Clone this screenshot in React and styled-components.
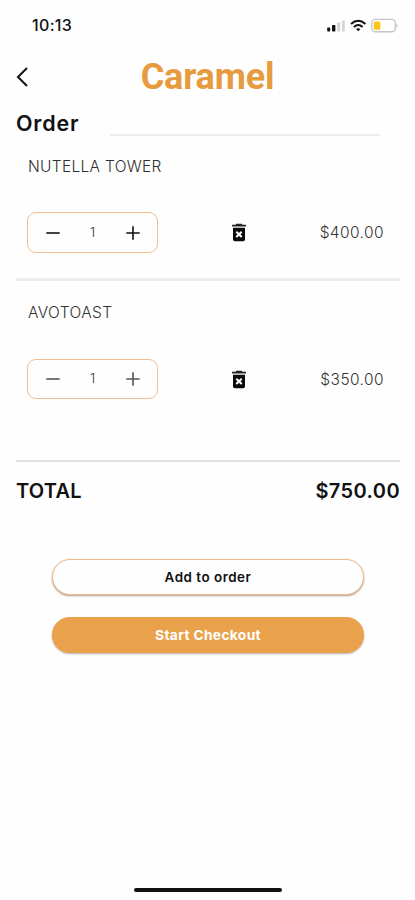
import React from "react";
import styled, { createGlobalStyle } from "styled-components";

const GlobalStyle = createGlobalStyle`
  *, *::before, *::after { box-sizing: border-box; }
  body { margin: 0; background: #fefefe; font-family: Inter, "Liberation Sans", sans-serif; color: #111; }
  button { font-family: inherit; padding: 0; margin: 0; border: 0; background: none; color: inherit; }
`;

const Screen = styled.main`
  width: 415px;
  height: 900px;
  display: flex;
  flex-direction: column;
  background: #fefefe;
  overflow: hidden;
`;

const StatusBar = styled.div`
  height: 51px;
  display: flex;
  align-items: center;
  justify-content: space-between;
  padding: 0 16px 0 32px;
`;

const Time = styled.span`
  font-size: 16px;
  font-weight: 500;
  line-height: 20px;
  padding-bottom: 1px;
  letter-spacing: 0.35px;
`;

const StatusIcons = styled.svg`
  width: 73px;
  height: 16px;
  display: block;
`;

const Header = styled.header`
  height: 52px;
  display: grid;
  grid-template-columns: 45px 1fr 45px;
  align-items: center;
`;

const BackButton = styled.button`
  width: 45px;
  height: 44px;
  display: flex;
  align-items: center;
  padding-left: 15px;
`;

const Brand = styled.h1`
  margin: 0;
  text-align: center;
  font-family: Roboto, sans-serif;
  font-size: 36px;
  font-weight: 700;
  line-height: 50px;
  letter-spacing: -0.2px;
  color: #e69b3f;
`;

const OrderHeading = styled.div`
  height: 40px;
  display: flex;
  align-items: flex-start;
  justify-content: space-between;
  padding: 0 35px 0 16px;
`;

const Heading = styled.h2`
  margin: 0;
  font-size: 21.5px;
  font-weight: 600;
  line-height: 40px;
  letter-spacing: 0.85px;
`;

const HeadingRule = styled.div`
  width: 270px;
  height: 2px;
  margin-top: 31px;
  background: #ececec;
`;

const Item = styled.section`
  height: ${(p) => p.$height}px;
  margin: 0 15px 0 16px;
  padding: ${(p) => p.$top}px 16px 0 11px;
  border-bottom: ${(p) => p.$rule}px solid ${(p) => p.$ruleColor};
`;

const ItemName = styled.div`
  padding-left: 1px;
  font-size: 15.5px;
  font-weight: 300;
  line-height: 20px;
  letter-spacing: ${(p) => p.$tracking}px;
  color: #303030;
  white-space: nowrap;
`;

const ItemRow = styled.div`
  height: 41px;
  margin-top: ${(p) => p.$gap}px;
  display: grid;
  grid-template-columns: 131px 1fr 83px;
  align-items: center;
`;

const Stepper = styled.div`
  height: ${(p) => p.$height}px;
  align-self: start;
  display: grid;
  grid-template-columns: 49px 1fr 49px;
  align-items: center;
  border: 1px solid #f2bd90;
  border-radius: 9px;
`;

const StepButton = styled.button`
  height: 38px;
  display: flex;
  align-items: center;
  justify-content: center;
  color: ${(p) => (p.$soft ? "#555" : "#111")};
`;

const Quantity = styled.span`
  text-align: center;
  font-size: 13px;
  font-weight: 300;
  line-height: 20px;
  padding-bottom: 2px;
  color: #333;
`;

const DeleteButton = styled.button`
  display: flex;
  justify-content: center;
  width: 24px;
  margin-left: 69px;
`;

const Price = styled.span`
  text-align: right;
  font-size: 15.5px;
  font-weight: 300;
  line-height: 20px;
  letter-spacing: 0.42px;
  color: #333;
`;

const TotalRow = styled.div`
  height: 59px;
  display: flex;
  align-items: center;
  justify-content: space-between;
  padding: 0 15px 2px 16px;
  font-size: 20px;
  font-weight: 600;
  line-height: 24px;
`;

const TotalText = styled.span`
  letter-spacing: ${(p) => p.$tracking}px;
`;

const Actions = styled.div`
  margin: 38px 51px 0 52px;
  display: flex;
  flex-direction: column;
  gap: 22px;
`;

const ActionButton = styled.button`
  height: 36px;
  border-radius: 18px;
  font-size: ${(p) => (p.$primary ? 13.8 : 13.4)}px;
  line-height: 20px;
  font-weight: ${(p) => (p.$primary ? 700 : 600)};
  letter-spacing: ${(p) => (p.$primary ? 0.33 : 0.52)}px;
  color: ${(p) => (p.$primary ? "#fff" : "#111")};
  background: ${(p) => (p.$primary ? "#e9a24b" : "#fefefe")};
  border: ${(p) => (p.$primary ? "0" : "1px solid #efba87")};
  box-shadow: 0 1px 2px ${(p) => (p.$primary ? "rgba(80,60,45,.4)" : "rgba(95,60,40,.5)")};
`;

const HomeIndicator = styled.div`
  width: 148px;
  height: 4px;
  margin: auto auto 8px 134px;
  border-radius: 2px;
  background: #111;
`;

const Minus = () => (
  <svg width="14" height="14" viewBox="0 0 14 14" fill="none" stroke="currentColor" strokeWidth="1.6">
    <path d="M0.3 7H13.7" />
  </svg>
);

const Plus = () => (
  <svg width="14" height="14" viewBox="0 0 14 14" fill="none" stroke="currentColor" strokeWidth="1.6">
    <path d="M0.3 7H13.7M7 0.3V13.7" />
  </svg>
);

const Trash = () => (
  <svg width="16" height="19" viewBox="0 0 16 19">
    <path d="M5.2 0.7H10.8L11.4 1.7H15V3.5H1V1.7H4.6Z" fill="#222" />
    <path d="M2 4.7H14V16.3Q14 18.3 12 18.3H4Q2 18.3 2 16.3Z" fill="#0b0b0b" />
    <path d="M5.3 8.7L10.7 14M10.7 8.7L5.3 14" stroke="#fff" strokeWidth="2" />
  </svg>
);

const StatusGlyphs = () => (
  <StatusIcons viewBox="0 0 73 16">
    <rect x="1.2" y="9.5" width="3" height="4" rx="0.8" fill="#111" />
    <rect x="6" y="7" width="3.4" height="6.5" rx="0.8" fill="#111" />
    <rect x="11.2" y="4.6" width="3" height="8.9" rx="0.6" fill="#d4d4d4" />
    <rect x="16" y="2.6" width="2.8" height="10.9" rx="0.6" fill="#d4d4d4" />
    <g fill="none" stroke="#111" strokeWidth="2">
      <path d="M25 6Q32.2 -0.4 39.4 6" />
      <path d="M27.8 9Q32.2 5 36.6 9" />
    </g>
    <path d="M30 11Q32.2 9.3 34.4 11L32.2 13.3Z" fill="#111" />
    <rect x="45.7" y="1.4" width="23.6" height="12.4" rx="3.6" fill="#fff" stroke="#c6c6c6" strokeWidth="1.4" />
    <rect x="47.7" y="3.4" width="6.7" height="8.4" rx="1.5" fill="#fac51c" />
    <path d="M70.5 5.4Q73 7.6 70.5 9.8Z" fill="#bdbdbd" />
  </StatusIcons>
);

const items = [
  { name: "NUTELLA TOWER", tracking: 0.3, price: "$400.00", height: 138, top: 14, gap: 35, box: 41, rule: 3, ruleColor: "#ececec" },
  { name: "AVOTOAST", tracking: 0.4, price: "$350.00", height: 181, top: 22, gap: 36, box: 40, rule: 2, ruleColor: "#e2e2e2", soft: true },
];

export default function App() {
  return (
    <>
      <GlobalStyle />
      <Screen>
        <StatusBar>
          <Time>10:13</Time>
          <StatusGlyphs />
        </StatusBar>
        <Header>
          <BackButton aria-label="Back">
            <svg width="14" height="20" viewBox="0 0 14 20" fill="none" stroke="#111" strokeWidth="2">
              <path d="M12 1L3 10L12 19" />
            </svg>
          </BackButton>
          <Brand>Caramel</Brand>
        </Header>
        <OrderHeading>
          <Heading>Order</Heading>
          <HeadingRule />
        </OrderHeading>
        {items.map((item) => (
          <Item key={item.name} $height={item.height} $top={item.top} $rule={item.rule} $ruleColor={item.ruleColor}>
            <ItemName $tracking={item.tracking}>{item.name}</ItemName>
            <ItemRow $gap={item.gap}>
              <Stepper $height={item.box}>
                <StepButton $soft={item.soft} aria-label="Decrease"><Minus /></StepButton>
                <Quantity>1</Quantity>
                <StepButton $soft={item.soft} aria-label="Increase"><Plus /></StepButton>
              </Stepper>
              <DeleteButton aria-label="Remove"><Trash /></DeleteButton>
              <Price>{item.price}</Price>
            </ItemRow>
          </Item>
        ))}
        <TotalRow>
          <TotalText $tracking={0.2}>TOTAL</TotalText>
          <TotalText $tracking={0.4}>$750.00</TotalText>
        </TotalRow>
        <Actions>
          <ActionButton>Add to order</ActionButton>
          <ActionButton $primary>Start Checkout</ActionButton>
        </Actions>
        <HomeIndicator />
      </Screen>
    </>
  );
}
